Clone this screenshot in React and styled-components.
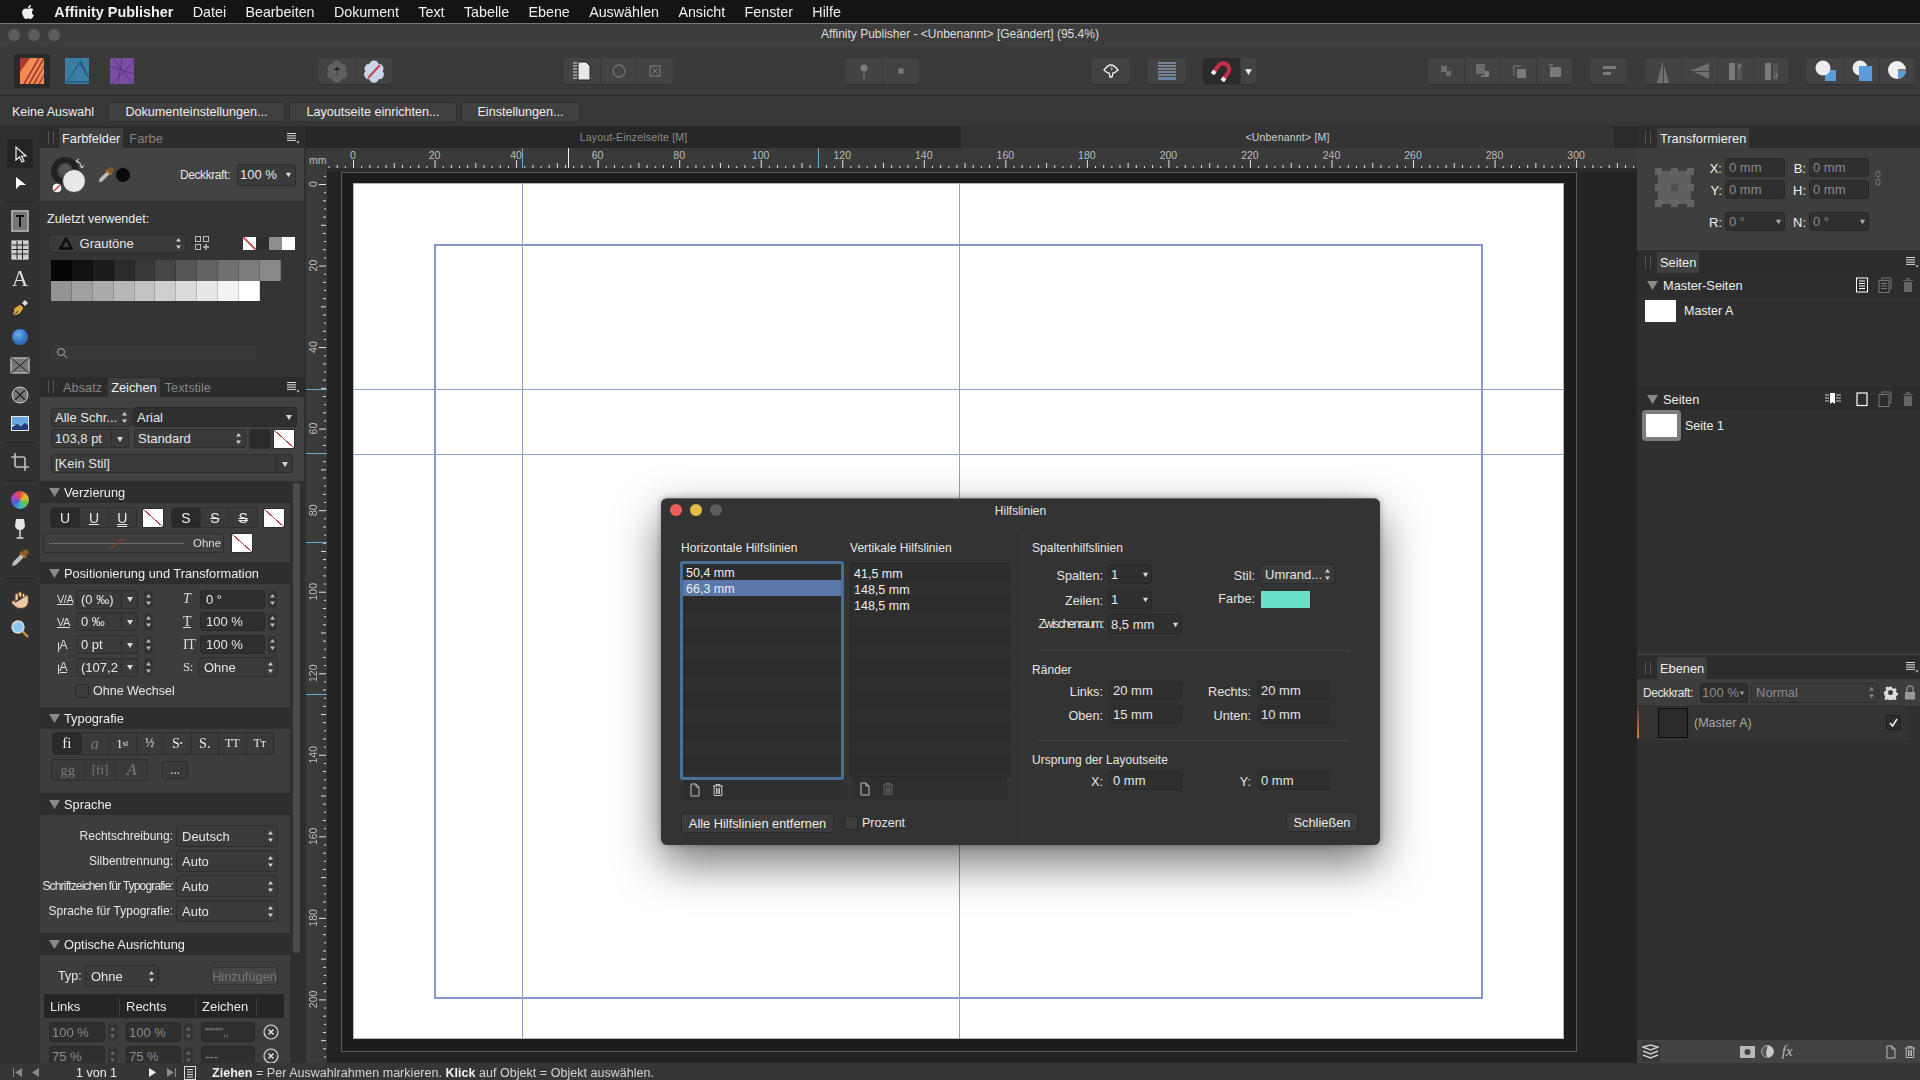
import React from 'react';
import styled, { createGlobalStyle } from 'styled-components';
import { FaApple } from 'react-icons/fa';
import { Crop, Hand } from 'lucide-react';

const Global = createGlobalStyle`
  html, body { margin: 0; padding: 0; background: #2f2f2f; }
  body { width: 1920px; height: 1080px; overflow: hidden; font-family: "Liberation Sans", Arial, sans-serif; color: #e8e8e8; font-size: 13px; }
  * { box-sizing: border-box; }
  svg { display: block; flex: none; }
`;

const Root = styled.div`position: relative; width: 1920px; height: 1080px; display: flex; flex-direction: column; overflow: hidden; filter: blur(0.35px);`;
const MenuBar = styled.div`height: 23px; flex: none; background: #141414; display: flex; align-items: center; padding-left: 20px; gap: 19.3px; font-size: 14.3px; color: #f0f0f0;`;
const AppleBox = styled.div`width: 15px; display: flex; color: #eee;`;
const MenuTitle = styled.b`font-weight: 700; font-size: 14.4px;`;
const MenuItem = styled.span``;
const TitleBar = styled.div`height: 24px; flex: none; background: #3d3d3d; border-top: 1px solid #777; padding-bottom: 3px; display: flex; align-items: center; position: relative; justify-content: center; font-size: 12px; color: #ddd;`;
const Lights = styled.div`position: absolute; left: 8px; top: 5px; display: flex; gap: 8px;`;
const Light = styled.i`width: 12px; height: 12px; border-radius: 50%; background: ${p => p.$c || '#5c5c5c'}; display: block;`;
const Toolbar = styled.div`height: 49px; flex: none; background: #3a3a3a; border-bottom: 1px solid #272727; display: flex; align-items: center; padding-left: 9px;`;
const AppIcon = styled.div`width: 36px; height: 34px; margin: 0 4.5px; display: flex; align-items: center; justify-content: center; background: ${p => p.$on ? '#2a2a2a' : 'transparent'}; border-radius: 2px;`;
const TGroup = styled.div`display: flex; height: 26px; margin-left: ${p => p.$ml || 0}px; background: #434343; border-radius: 3px; overflow: hidden; box-shadow: 0 1px 1px rgba(0,0,0,.18);`;
const TBtn = styled.div`width: ${p => p.$w || 36}px; display: flex; align-items: center; justify-content: center; background: ${p => p.$on ? '#2b2b2b' : 'transparent'}; & + & { border-left: 1px solid #383838; }`;
const ContextBar = styled.div`height: 31px; flex: none; background: #373737; display: flex; align-items: center; padding: 1px 0 0 12px; gap: 4px; border-bottom: 1px solid #2b2b2b;`;
const CtxLabel = styled.span`width: 92px; font-size: 12.5px; color: #eee;`;
const CtxBtn = styled.div`height: 20px; width: ${p => p.$w}px; display: flex; align-items: center; justify-content: center; background: #404040; border: 1px solid #2f2f2f; border-radius: 3px; font-size: 12.6px; color: #eee;`;
const Body = styled.div`flex: 1; display: flex; min-height: 0;`;
const StatusBar = styled.div`height: 17px; flex: none; background: #363636; display: flex; align-items: center; padding: 2px 0 0 12px; font-size: 12.5px; color: #ddd;`;
const NavBtn = styled.div`margin-left: ${p => p.$ml || 0}px; display: flex;`;
const NavText = styled.span`margin-left: 36px; width: 72px; font-size: 12.5px; color: #eee;`;
const StatusMsg = styled.span`margin-left: 16px; letter-spacing: .03px; color: #d5d5d5; b { color: #f0f0f0; }`;

const ToolCol = styled.div`width: 40px; flex: none; background: #313131; padding-top: 12px; display: flex; flex-direction: column; align-items: center;`;
const ToolSlot = styled.div`width: 26px; height: 29px; display: flex; align-items: center; justify-content: center; flex: none; background: ${p => p.$on ? '#242424' : 'transparent'}; border-radius: 3px;`;
const ToolDiv = styled.div`width: 100%; height: ${p => p.$h || 9}px; flex: none; display: flex; align-items: center; &::before { content: ''; flex: 1; margin: 0 6px; height: 1px; background: #262626; }`;
const SerifA = styled.span`font-family: "Liberation Serif", serif; font-size: 23px; color: #ddd;`;
const Wheel = styled.div`width: 18px; height: 18px; border-radius: 50%; background: conic-gradient(#e6493c, #e8b93a, #6cc24a, #35b6c9, #4a5fd0, #b548c0, #e6493c);`;

const LeftPanel = styled.div`width: 266px; flex: none; background: #2f2f2f; display: flex; flex-direction: column; overflow: hidden;`;
const TabRow = styled.div`height: ${p => p.$h || 21}px; flex: none; background: #2c2c2c; display: flex; align-items: flex-end; padding-left: 7px; padding-right: ${p => p.$pr ?? 6}px;`;
const Grip = styled.div`width: 12px; height: 14px; margin-bottom: 3px; flex: none; &::before { content: ''; display: block; margin-left: 1px; width: 4px; height: 13px; border-left: 1px solid #555; border-right: 1px solid #555; }`;
const Tab = styled.div`height: ${p => p.$tall || 20}px; padding: 0 3px; display: flex; align-items: center; font-size: 12.8px; background: ${p => p.$on ? '#3f3f3f' : 'transparent'}; color: ${p => p.$on ? '#f0f0f0' : '#858585'}; margin-left: ${p => p.$ml || 0}px;`;
const PMenu = styled.div`margin-left: auto; align-self: center;`;
const ColorHead = styled.div`height: 53px; flex: none; width: 264px; background: #434343; display: flex; align-items: center; padding-left: 10px;`;
const DeckLabel = styled.span`margin-left: ${p => p.$ml || 0}px; width: 57px; flex: none; font-size: 12px; letter-spacing: -0.42px; color: #e5e5e5;`;
const SwatchArea = styled.div`height: 176px; flex: none; width: 264px; background: #343434; padding: 10px 0 0 7px;`;
const Caption = styled.div`height: 16px; display: flex; align-items: center; font-size: 12.5px; color: #eee;`;
const SwRow = styled.div`display: flex; align-items: center; margin-top: 7px; margin-left: 1px;`;
const Toggle = styled.div`display: flex; margin-left: 33px;`;
const ToggleCell = styled.div`width: 13px; height: 13px; background: ${p => p.$none ? 'linear-gradient(to top right, #fff 46%, #c66 46%, #c66 54%, #fff 54%)' : p.$bg};`;
const SwGrid = styled.div`display: grid; grid-template-columns: repeat(11, 20.9px); grid-auto-rows: 20.5px; margin: 7px 0 0 4px;`;
const SwCell = styled.div`background: ${p => p.$c}; border-right: 1px solid rgba(0,0,0,.15);`;
const Search = styled.div`width: 209px; height: 18px; margin: 43px 0 0 2px; background: #383838; border: 1px solid #303030; border-radius: 3px; display: flex; align-items: center; padding-left: 6px;`;
const CharHead = styled.div`height: 84px; flex: none; width: 264px; background: #424242; padding: 10px 0 0 11px; display: flex; flex-direction: column;`;
const Flex = styled.div`display: flex; align-items: center; gap: ${p => p.$gap || 0}px; margin-top: ${p => p.$mt || 0}px; margin-left: ${p => p.$ml || 0}px;`;
const Ctl = styled.div`width: ${p => p.$w}px; height: ${p => p.$h || 19}px; flex: none; display: flex; align-items: center; padding-left: ${p => p.$pl ?? 5}px; background: ${p => p.$dark ? '#2f2f2f' : '#3a3a3a'}; border: 1px solid ${p => p.$dark ? '#292929' : '#2d2d2d'}; border-radius: 3px; font-size: ${p => p.$fs || 13}px; color: ${p => p.$dim ? '#8b8b8b' : '#e6e6e6'}; white-space: nowrap; margin-left: ${p => p.$ml || 0}px; margin-top: ${p => p.$mt || 0}px;`;
const CtlText = styled.span`flex: 1; min-width: 0; margin-left: ${p => p.$ml || 0}px;`;
const CtlCap = styled.span`width: ${p => p.$w || 16}px; align-self: stretch; flex: none; display: flex; align-items: center; justify-content: center; border-left: ${p => p.$sep ? '1px solid #2b2b2b' : '0'};`;
const NoneSw = styled.div`width: ${p => p.$w || 20}px; height: ${p => p.$h || 18}px; flex: none; margin-left: ${p => p.$ml || 0}px; background: linear-gradient(to top right, #fff 48%, #b84a4a 48%, #b84a4a 52%, #fff 52%); box-shadow: 0 0 0 1px #2d2d2d;`;
const BlackSw = styled.div`width: 20px; height: 18px; flex: none; background: #2a2a2a; box-shadow: 0 0 0 1px #333; border-radius: 2px;`;
const ScrollWrap = styled.div`flex: 1; min-height: 0; display: flex; overflow: hidden;`;
const ScrollContent = styled.div`width: 250px; flex: none; display: flex; flex-direction: column;`;
const Gutter = styled.div`width: 16px; flex: none; padding: 2px 0 0 3px;`;
const Thumb = styled.div`width: 7px; height: 470px; border-radius: 4px; background: #4b4b4b;`;
const SecHead = styled.div`height: 22px; flex: none; background: #2e2e2e; display: flex; align-items: center; padding-left: 9px; font-size: 12.8px; color: #eee; gap: 4px;`;
const SecBody = styled.div`height: ${p => p.$h}px; flex: none; background: #3d3d3d; padding: ${p => p.$pt || 0}px 0 0 ${p => p.$pl || 0}px;`;
const Seg = styled.div`display: flex; height: ${p => p.$h || 19}px; background: #3a3a3a; border-radius: 3px; box-shadow: 0 0 0 1px #2d2d2d; flex: none; margin-left: ${p => p.$ml || 0}px;`;
const SegCell = styled.div`width: ${p => p.$w || 28.3}px; display: flex; align-items: center; justify-content: center; font-size: ${p => p.$fs || 14}px; font-family: ${p => p.$serif ? '"Liberation Serif", serif' : 'inherit'}; font-style: ${p => p.$it ? 'italic' : 'normal'}; color: ${p => p.$dim ? '#7a7a7a' : '#e9e9e9'}; background: ${p => p.$on ? '#2a2a2a' : 'transparent'}; & + & { border-left: 1px solid #2e2e2e; }`;
const Deco = styled.span`text-decoration: ${p => p.$d}; text-decoration-thickness: 1px;`;
const Sup = styled.sup`font-size: 8px; line-height: 0;`;
const SliderBox = styled.div`width: 181px; height: 20px; flex: none; margin-left: 3px; background: #3f3f3f; border: 1px solid #2d2d2d; border-radius: 2px; display: flex; align-items: center; padding-left: 5px; font-size: 11.5px; color: #ddd;`;
const SliderLine = styled.div`width: 135px; height: 1px; background: #6b6b6b; margin-right: 9px; display: flex; justify-content: center; align-items: center; &::after { content: ''; width: 16px; height: 1px; background: #a33; transform: rotate(-38deg); }`;
const PosGrid = styled.div`display: grid; padding-left: 17px; grid-template-columns: 19px 62px 45px 17px 65px 12px; grid-auto-rows: 20px; row-gap: 2.8px; align-items: center;`;
const PosIcon = styled.span`font-size: ${p => p.$fs || 11}px; font-family: ${p => p.$serif ? '"Liberation Serif", serif' : 'inherit'}; font-style: ${p => p.$it ? 'italic' : 'normal'}; color: #ddd; text-decoration: ${p => p.$u ? 'underline' : 'none'}; white-space: nowrap; letter-spacing: -0.5px; line-height: 14px;`;
const Stepper = styled.div`width: 9px; height: 18px; margin-left: ${p => p.$ml ?? 6}px; background: #333; border-radius: 4px; display: flex; align-items: center; justify-content: center;`;
const CheckBox = styled.div`width: 14px; height: 14px; flex: none; background: #3c3c3c; border: 1px solid #2a2a2a; border-radius: 3px; display: flex; align-items: center; justify-content: center;`;
const LangRow = styled.div`display: flex; align-items: center; height: 22px; margin-top: ${p => p.$mt || 0}px;`;
const LangLabel = styled.span`width: 133px; flex: none; text-align: right; font-size: 12px; color: #e6e6e6; white-space: nowrap; letter-spacing: ${p => p.$cond ? '-0.82px' : '0'};`;
const DotsBtn = styled.div`width: 26px; height: 18px; margin-left: 15px; background: #3a3a3a; border: 1px solid #2b2b2b; border-radius: 3px; display: flex; align-items: center; justify-content: center; font-size: 12px;`;
const TypRow = styled.div`display: flex; align-items: center; height: 22px; padding-left: 18px;`;
const TypLabel = styled.span`width: 27px; font-size: 12.5px;`;
const GhostBtn = styled.div`width: 67px; height: 18px; margin-left: 52px; background: #454545; border: 1px solid #333; border-radius: 3px; font-size: 12.8px; color: #777; display: flex; align-items: center; justify-content: center;`;
const TblHead = styled.div`display: grid; grid-template-columns: 76px 76px 61px 27px; width: 240px; height: 24px; margin: 7px 0 0 4px; background: #252525; align-items: center; font-size: 13px; padding-top: 1px;`;
const TblHeadCell = styled.div`padding-left: 6px; height: 18px; display: flex; align-items: center; border-right: 1px solid #3a3a3a;`;
const TblRow = styled.div`display: flex; align-items: center; height: 20px; margin: ${p => p.$mt || 0}px 0 0 9px;`;
const MiniStep = styled.div`width: 9px; height: 18px; margin: 0 ${p => p.$mr || 9}px 0 3px; background: #343434; border-radius: 4px; display: flex; align-items: center; justify-content: center;`;

const CanvasCol = styled.div`flex: 1; min-width: 0; display: flex; flex-direction: column; background: #232323;`;
const DocTabs = styled.div`height: 21px; flex: none; display: flex; background: #2a2a2a;`;
const DocTab = styled.div`width: ${p => p.$w}px; flex: none; display: flex; align-items: center; justify-content: center; padding-bottom: 2px; font-size: 10.5px; letter-spacing: .2px; background: ${p => p.$on ? '#343434' : '#272727'}; color: ${p => p.$on ? '#cfcfcf' : '#8d8d8d'};`;
const RulerTop = styled.div`height: 24px; flex: none; display: flex; background: #3a3a3a;`;
const Corner = styled.div`width: 21px; flex: none; font-size: 10.5px; color: #c0c0c0; padding: 6px 0 0 3px;`;
const CanvasRow = styled.div`flex: 1; min-height: 0; display: flex; overflow: hidden;`;
const Viewport = styled.div`flex: 1; min-width: 0; padding-left: 14px; background: #232323;`;
const Frame = styled.div`width: 1236px; height: 880px; background: #1d1d1d; border: 1px solid #5a5a5a; padding: 10px 11px 0 11px;`;
const Page = styled.div`position: relative; width: 1211px; height: 856px; background: #fff; box-shadow: inset 0 0 0 1px #b5b5b5;`;
const MarginBox = styled.div`position: absolute; left: 81px; top: 61px; width: 1049px; height: 755px; border: 2px solid #8497cf;`;
const VGuide = styled.div`position: absolute; top: 0; bottom: 0; left: ${p => p.$x}px; width: 1px; background: #8fa3c4;`;
const HGuide = styled.div`position: absolute; left: 0; right: 0; top: ${p => p.$y}px; height: 1px; background: #8fa3c4;`;

const RightPanel = styled.div`width: 283px; flex: none; background: #303030; display: flex; flex-direction: column; overflow: hidden;`;
const TransBody = styled.div`height: 101px; flex: none; background: #3e3e3e; display: flex; padding-left: 18px;`;
const Selector = styled.div`width: 39px; height: 39px; margin-top: 20px; flex: none;`;
const TransGrid = styled.div`display: grid; margin-top: 10px; grid-template-columns: 31px 60px 24px 60px; grid-template-rows: 19px 19px 29px; row-gap: 3px; align-items: end; align-content: start;`;
const TransLabel = styled.span`text-align: right; padding-right: 3px; font-size: 13px; line-height: 21px; height: 19px; color: #eee;`;
const Chain = styled.div`margin: 22px 0 0 6px;`;
const Sep = styled.div`height: 1px; flex: none; background: #474747;`;
const PagesBody = styled.div`flex: none; height: 381px; background: #303030;`;
const PageHead = styled.div`height: 24px; display: flex; align-items: center; padding-left: 10px; background: #2d2d2d; margin-top: ${p => p.$mt || 0}px; font-size: 12.8px; color: #eee; gap: 5px;`;
const IconSlots = styled.div`margin-left: auto; display: flex; padding-right: 1px;`;
const IconSlot = styled.div`width: ${p => p.$w || 23}px; display: flex; align-items: center; justify-content: center;`;
const ThumbRow = styled.div`display: flex; align-items: center; gap: 8px; padding-left: 8px; margin-top: 3px; height: 22px; font-size: 12.5px; color: #eee;`;
const PageThumb = styled.div`width: 31px; height: 22px; flex: none; background: #fff;`;
const SelThumb = styled.div`width: 39px; height: 31px; flex: none; margin-right: -4px; background: #fff; border: 4px solid #7d7d7d; border-radius: 4px;`;
const ThumbRowSel = styled(ThumbRow)`height: 31px; margin-top: -1px; padding-left: 5px; gap: 8px;`;
const LayerBar = styled.div`height: 28px; flex: none; background: #3d3d3d; display: flex; align-items: center; padding-left: 6px; font-size: 12.5px; color: #eee; border-bottom: 1px solid #2c2c2c;`;
const LayerRow = styled.div`height: 33px; flex: none; background: #333; display: flex; align-items: center; border-bottom: 1px solid #3a3a3a; font-size: 12.5px; color: #aaa; margin-right: 13px; padding-bottom: 1px;`;
const OrangeStrip = styled.div`width: 2px; align-self: stretch; flex: none; background: linear-gradient(#5a3a30, #e07a48);`;
const LayerThumb = styled.div`width: 30px; height: 30px; flex: none; margin: 0 6px 0 19px; background: #2b2b2b; border: 1px solid #0d0d0d;`;
const LayerCheck = styled.div`width: 15px; height: 15px; margin-left: auto; margin-right: 6px; background: #2c2c2c; border: 1px solid #1f1f1f; border-radius: 2px; display: flex; align-items: center; justify-content: center;`;
const LayerFill = styled.div`flex: 1; background: #303030;`;
const LayerBottom = styled.div`height: 23px; flex: none; background: #424242; display: flex; align-items: center; padding-left: 5px;`;
const StackBtn = styled.div`width: 20px; height: 20px; display: flex; align-items: center; justify-content: center; background: #373737;`;

const Dialog = styled.div`position: absolute; left: 661px; top: 498px; width: 719px; height: 347px; background: #333; border-radius: 6px; border-top: 1px solid #6a6a6a; box-shadow: 0 18px 45px rgba(0,0,0,.55), 0 0 6px rgba(0,0,0,.3); display: flex; flex-direction: column;`;
const DlgTitle = styled.div`height: 24px; flex: none; position: relative; display: flex; align-items: center; justify-content: center; font-size: 12px; color: #e6e6e6;`;
const DlgLights = styled.div`position: absolute; left: 9px; top: 5px; display: flex; gap: 8px;`;
const DlgBody = styled.div`flex: 1; display: flex; padding: 17px 0 0 19px;`;
const DlgLeft = styled.div`width: 340px; flex: none;`;
const ListCols = styled.div`display: flex; gap: 6px;`;
const ListCol = styled.div`width: ${p => p.$w}px; flex: none;`;
const DlgHead = styled.div`height: 16px; display: flex; align-items: center; padding-left: ${p => p.$pl || 0}px; font-size: 12px; color: #e8e8e8; letter-spacing: .05px;`;
const List = styled.div`height: ${p => p.$h}px; margin-top: ${p => p.$mt}px; border: ${p => p.$focus ? '3px solid #4a7099' : '1px solid #282828'}; border-radius: ${p => p.$focus ? 3 : 0}px; padding-top: ${p => p.$focus ? 0 : 1}px; background: repeating-linear-gradient(#2d2d2d 0 16px, #2f2f2f 16px 32px); font-size: 12.5px;`;
const ListItem = styled.div`height: 16px; padding: 2px 0 0 ${p => p.$pl || 3}px; line-height: 14px; color: #eee; background: ${p => p.$sel ? '#5a78a8' : 'transparent'};`;
const ListFoot = styled.div`height: ${p => p.$h}px; background: #2f2f2f; display: flex; align-items: center; gap: 9px; padding-left: 5px; margin: 0 ${p => p.$mr || 3}px 0 ${p => p.$ml || 3}px;`;
const DlgFoot = styled.div`display: flex; align-items: center; margin-top: 13px; padding-left: 1px;`;
const DlgBtn = styled.div`height: 20px; width: ${p => p.$w}px; flex: none; background: #3c3c3c; border: 1px solid #2a2a2a; border-radius: 3px; padding-top: 1px; display: flex; align-items: center; justify-content: center; font-size: 12.8px; color: #eee; align-self: ${p => p.$end ? 'flex-end' : 'auto'}; margin-top: ${p => p.$mt || 0}px;`;
const DlgCheck = styled(CheckBox)`margin-left: 10px;`;
const CheckText = styled.span`margin-left: 4px; font-size: 12.5px; color: #e6e6e6;`;
const DlgDivider = styled.div`width: 1px; height: 302px; margin: -8px 0 0 2px; flex: none; background: #3e3e3e;`;
const DlgRight = styled.div`width: 326px; margin-left: 9px; flex: none; display: flex; flex-direction: column;`;
const FormRow = styled.div`display: flex; align-items: center; height: ${p => p.$h || 20}px; margin-top: ${p => p.$mt || 0}px;`;
const FormLabel = styled.span`width: ${p => p.$w}px; flex: none; text-align: right; padding: ${p => p.$up ? 0 : 3}px 5px 0 0; font-size: ${p => p.$cond ? 12 : 12.7}px; color: #e6e6e6; white-space: nowrap; letter-spacing: ${p => p.$cond ? '-1.3px' : '0'};`;
const HRule = styled.div`height: 1px; flex: none; background: #444; margin: ${p => p.$mt}px 8px 0 7px;`;
const ColorSw = styled.div`width: 49px; height: 17px; background: #67e2c9; margin-left: 1px;`;
const FormHead = styled(DlgHead)`margin-top: ${p => p.$mt || 0}px;`;

const UpDown = ({ c = '#d0d0d0' }) => (
  <svg width="7" height="13" viewBox="0 0 7 13"><path d="M3.500 1 6 4.500H1zM3.500 12 1 8.500h5z" fill={c} /></svg>
);
const Caret = ({ c = '#d8d8d8', s = 8 }) => (
  <svg width={s} height={s} viewBox="0 0 8 8"><path d="M1 2h6L4 7z" fill={c} /></svg>
);
const Tri = () => <svg width="11" height="9" viewBox="0 0 11 9"><path d="M0 0h11L5.500 9z" fill="#8a8a8a" /></svg>;
const MenuIcon = () => (
  <svg width="13" height="12" viewBox="0 0 13 12"><path d="M0 1.500h9M0 3.800h9M0 6.100h9M0 8.400h9" stroke="#ddd" /><path d="M9.500 9.500h3L11 11.500z" fill="#ddd" /></svg>
);
const DocIcon = ({ c = '#bbb', s = 14 }) => (
  <svg width={s} height={s} viewBox="0 0 14 14" fill="none"><path d="M3 1h5l3 3v9H3zM8 1v3h3" stroke={c} /></svg>
);
const Trash = ({ c = '#bbb', s = 14 }) => (
  <svg width={s} height={s} viewBox="0 0 14 14" fill="none"><path d="M2 3h10M5 3V1.500h4V3M3.200 3v9.500h7.600V3M5.500 5v6M7 5v6M8.500 5v6" stroke={c} /></svg>
);
const NewPageLines = ({ c = '#fff' }) => (
  <svg width="14" height="16" viewBox="0 0 14 16" fill="none"><rect x="1.500" y="1" width="11" height="14" stroke={c} /><path d="M4 4h6M4 6.500h6M4 9h6M4 11.500h6" stroke={c} /></svg>
);
const CopyLines = () => (
  <svg width="14" height="16" viewBox="0 0 14 16" fill="none" stroke="#777"><path d="M4 3V1h9v11h-2" /><rect x="1" y="3.500" width="10" height="12" /><path d="M3 6.500h6M3 9h6M3 11.500h6" /></svg>
);
const SquarePage = () => <svg width="14" height="16" viewBox="0 0 14 16" fill="none"><rect x="2" y="2" width="10" height="12.500" stroke="#fff" strokeWidth="1.200" /></svg>;
const CopySquare = () => <svg width="14" height="16" viewBox="0 0 14 16" fill="none" stroke="#777"><path d="M4 3V1h9v11h-2" /><rect x="1" y="3.500" width="10" height="12" /></svg>;
const TrashFill = () => <svg width="12" height="16" viewBox="0 0 12 16"><path d="M1 3h10v1H1zM4 1h4v1.400H4zM2 5h8v10H2z" fill="#666" /></svg>;

const PubIcon = () => (
  <svg width="24" height="26" viewBox="0 0 24 26"><rect width="24" height="26" fill="#f08d56" /><path d="M0 0h10L0 14zM3 26 18 0h2L5 26zM8 26 23 0h1v2L10 26zM13 26l11-19v2L15 26zM18 26l6-10v2l-4 8z" fill="#a93a2e" /></svg>
);
const DesIcon = () => (
  <svg width="24" height="26" viewBox="0 0 24 26"><rect width="24" height="26" fill="#3b7da3" /><path d="M0 26 15 3h1.500L3 23h21v1.500H0zM16 3l8 16v2L14 5z" fill="#24597c" /></svg>
);
const PhoIcon = () => (
  <svg width="24" height="26" viewBox="0 0 24 26"><rect width="24" height="26" fill="#7a4ea2" /><path d="M12 0 8 26M0 8l24 8M24 3 2 26M3 0l20 26" stroke="#56347a" strokeWidth="1" /></svg>
);
const Flower = ({ slash }) => (
  <svg width="24" height="24" viewBox="0 0 24 24"><path d="M12 1.500a4.500 4.500 0 0 1 4.400 3.200 4.800 4.800 0 0 1 4.200 7.600 4.800 4.800 0 0 1-4 8 4.800 4.800 0 0 1-9.200 0 4.800 4.800 0 0 1-4-8 4.800 4.800 0 0 1 4.200-7.600A4.500 4.500 0 0 1 12 1.500z" fill={slash ? '#c9d6ea' : '#5f5f5f'} />{slash ? <path d="M6 19 18 6" stroke="#c6454a" strokeWidth="2" /> : <path d="M12 8v8M9 11l3-3 3 3" stroke="#3d3d3d" />}</svg>
);
const SmallPageTool = () => (
  <svg width="18" height="20" viewBox="0 0 18 20"><path d="M0 2h6M0 5h6M0 8h6M0 11h6M0 14h6M0 17h18" stroke="#ddd" /><path d="M5 1h8l4 4v14H5z" fill="#e8e8e8" stroke="#222" /></svg>
);
const Dim = styled.span`display: flex; color: #707070;`;
const Svg = ({ children, w = 18, h = 18, vb }) => <svg width={w} height={h} viewBox={vb || `0 0 ${w} ${h}`}>{children}</svg>;

const Magnet = () => (
  <svg width="24" height="24" viewBox="0 0 24 24" fill="none"><g transform="rotate(35 12 12)"><path d="M6 18V10a6 6 0 0 1 12 0v8" stroke="#c23049" strokeWidth="4.200" /><path d="M6 16v4M18 16v4" stroke="#f4f4f4" strokeWidth="4.200" /></g></svg>
);

const ShapeOp = ({ kind }) => (
  <svg width="24" height="24" viewBox="0 0 24 24">
    {kind === 0 && <><path d="M12 11h11v11H12z" fill="#5a9bdc" /><circle cx="10" cy="9" r="7.500" fill="#ededed" /></>}
    {kind === 1 && <><circle cx="10" cy="9" r="7.500" fill="#ededed" /><path d="M9 7h13v15H9z" fill="#5a9bdc" /></>}
    {kind === 2 && <><circle cx="11" cy="11" r="9" fill="#f0f0f0" /><path d="M12 12h8a9 9 0 0 1-8 8z" fill="#5a9bdc" /><path d="M12 10h10v2H12z" fill="#3a3a3a" opacity=".6" /></>}
  </svg>
);

const ChooserIcon = () => (
  <svg width="38" height="38" viewBox="0 0 38 38" fill="none">
    <circle cx="15" cy="15" r="11" stroke="#222" strokeWidth="6" />
    <circle cx="15" cy="14" r="6" fill="#555" />
    <circle cx="24" cy="25" r="11.500" fill="#e8e8e8" stroke="#3a3a3a" />
    <path d="M26 5q5 1 6 7" stroke="#ddd" />
    <path d="M26 5l3-2M26 5l3 2M32 12l-2-2.500M32 12l2-2.500" stroke="#ddd" />
    <circle cx="7" cy="32" r="5" fill="#fff" stroke="#222" />
    <path d="M4 35 10 29" stroke="#c23a3a" strokeWidth="1.400" />
  </svg>
);

const Pipette = ({ s = 20 }) => (
  <svg width={s} height={s} viewBox="0 0 20 20" fill="none"><path d="M2 18 3 14 11 6l3 3-8 8z" fill="#bdbdbd" /><path d="M11 3l6 6-2 1.500-5.500-5.500z" fill="#a26a2a" /><circle cx="15.500" cy="4.500" r="3" fill="#8a5a25" /></svg>
);

const CloseCircle = () => (
  <svg width="16" height="16" viewBox="0 0 16 16" fill="none" stroke="#ddd"><circle cx="8" cy="8" r="7" strokeWidth="1.200" /><path d="M5.500 5.500l5 5M10.500 5.500l-5 5" strokeWidth="1.500" /></svg>
);

const Swatches = ['#050505', '#111', '#1c1c1c', '#2a2a2a', '#383838', '#464646', '#555', '#636363', '#6f6f6f', '#7b7b7b', '#888', '#939393', '#9f9f9f', '#ababab', '#b7b7b7', '#c3c3c3', '#cfcfcf', '#dbdbdb', '#e7e7e7', '#f3f3f3', '#fff'];

const HRuler = () => {
  const o = 26, k = 4.077, ticks = [], labels = [];
  for (let m = -6; m <= 314; m += 2) {
    const x = o + m * k;
    const h = m % 20 === 0 ? 8 : m % 10 === 0 ? 5 : m % 4 === 0 ? 3 : 2;
    ticks.push(<rect key={m} x={x} y={20 - h} width="1" height={h} fill="#e2e2e2" />);
    if (m % 20 === 0 && m >= 0 && m <= 300) labels.push(<text key={m} x={x} y="11" fontSize="10.5" fill="#bdbdbd" textAnchor="middle" fontFamily="Liberation Sans, sans-serif">{m}</text>);
  }
  return (
    <svg width="1310" height="24" viewBox="0 0 1310 24">
      <rect y="20" width="1310" height="4" fill="#2b2b2b" />
      {ticks}{labels}
      <rect x="195" y="0" width="1" height="20" fill="#6aa9c9" />
      <rect x="241" y="0" width="1" height="20" fill="#f0f0f0" />
      <rect x="491" y="0" width="1" height="20" fill="#6aa9c9" />
    </svg>
  );
};
const VRuler = () => {
  const o = 12, k = 4.077, ticks = [], labels = [];
  for (let m = -2; m <= 216; m += 2) {
    const y = o + m * k;
    const h = m % 20 === 0 ? 7 : m % 10 === 0 ? 5 : m % 4 === 0 ? 3 : 2;
    ticks.push(<rect key={m} x={20 - h} y={y} width={h} height="1" fill="#e2e2e2" />);
    if (m % 20 === 0 && m >= 0) labels.push(<text key={m} transform={`translate(11 ${y}) rotate(-90)`} fontSize="10.5" fill="#bdbdbd" textAnchor="middle" fontFamily="Liberation Sans, sans-serif">{m}</text>);
  }
  return (
    <svg width="21" height="892" viewBox="0 0 21 892">
      <rect width="21" height="892" fill="#3a3a3a" />
      {ticks}{labels}
      {[217, 281, 370, 522].map(y => <rect key={y} y={y} width="21" height="1" fill="#6aa9c9" />)}
    </svg>
  );
};

const PosField = ({ children }) => (
  <Ctl $w={62} $h={19} $pl={4}><CtlText>{children}</CtlText><CtlCap $w={16} $sep><Caret /></CtlCap></Ctl>
);
const NumField = ({ children }) => <Ctl $w={65} $h={19} $dark><CtlText>{children}</CtlText></Ctl>;
const Step = ({ ml }) => <Stepper $ml={ml}><UpDown c="#bbb" /></Stepper>;
const FxText = styled.span`font-family: "Liberation Serif", serif; font-style: italic; font-size: 15px; color: #bbb;`;

const LightsSet = () => <><Light /><Light /><Light /></>;

export default function App() {
  return (
    <Root>
      <Global />
      <MenuBar>
        <AppleBox><FaApple size={16} /></AppleBox>
        <MenuTitle>Affinity Publisher</MenuTitle>
        {['Datei', 'Bearbeiten', 'Dokument', 'Text', 'Tabelle', 'Ebene', 'Auswählen', 'Ansicht', 'Fenster', 'Hilfe'].map(m => <MenuItem key={m}>{m}</MenuItem>)}
      </MenuBar>
      <TitleBar>
        <Lights><LightsSet /></Lights>
        Affinity Publisher - &lt;Unbenannt&gt; [Geändert] (95.4%)
      </TitleBar>
      <Toolbar>
        <AppIcon $on><PubIcon /></AppIcon>
        <AppIcon><DesIcon /></AppIcon>
        <AppIcon><PhoIcon /></AppIcon>
        <TGroup $ml={174}>
          <TBtn $w={37}><Flower /></TBtn>
          <TBtn $w={37}><Flower slash /></TBtn>
        </TGroup>
        <TGroup $ml={171}>
          <TBtn $w={37}><SmallPageTool /></TBtn>
          <TBtn $w={36}><Svg><circle cx="9" cy="9" r="6" fill="none" stroke="#707070" strokeWidth="1.300" /></Svg></TBtn>
          <TBtn $w={37}><Svg><rect x="4" y="4" width="10" height="10" fill="none" stroke="#808080" /><path d="M6.500 6.500l5 5M11.500 6.500l-5 5" stroke="#808080" /></Svg></TBtn>
        </TGroup>
        <TGroup $ml={172}>
          <TBtn $w={37}><Svg><circle cx="9" cy="6" r="3.600" fill="#7c7c7c" /><path d="M9 9v8" stroke="#7c7c7c" /></Svg></TBtn>
          <TBtn $w={37}><Svg><rect x="6.500" y="6.500" width="5" height="5" fill="#7c7c7c" /></Svg></TBtn>
        </TGroup>
        <TGroup $ml={172}>
          <TBtn $w={39}><Svg><path d="M2 8c3-4 5-5 7-5s4 1 7 5c-2 2-4 3-5 3l-1 4H8L7 11C5 11 4 10 2 8z" fill="none" stroke="#eee" strokeWidth="1.300" /><path d="M9 4l2 3-2 2" fill="#8aa8d6" /></Svg></TBtn>
        </TGroup>
        <TGroup $ml={17}>
          <TBtn $w={39}><svg width="20" height="20" viewBox="0 0 20 20"><path d="M1 2h18M1 5h18M1 8h18M1 11h18M1 14h18M1 17h18" stroke="#a8c4e4" strokeWidth="1.200" /><path d="M1 18.500h18" stroke="#5a86b8" /></svg></TBtn>
        </TGroup>
        <TGroup $ml={17}>
          <TBtn $w={37} $on><Magnet /></TBtn>
          <TBtn $w={16}><Caret c="#eee" s={9} /></TBtn>
        </TGroup>
        <TGroup $ml={172}>
          <TBtn $w={36}><Dim><Svg><path d="M4 4h6v6H4zM9 9h5v5H9z" fill="#6c6c6c" /></Svg></Dim></TBtn>
          <TBtn $w={36}><Dim><Svg><path d="M2 2h9v10H2z" fill="#6c6c6c" /><path d="M11 9h4v6H7v-2h4z" fill="#7a7a7a" /></Svg></Dim></TBtn>
          <TBtn $w={36}><Dim><Svg><path d="M3 3h8v2H5v8H3z" fill="#5f5f5f" /><path d="M7 7h9v9H7z" fill="#7a7a7a" /></Svg></Dim></TBtn>
          <TBtn $w={36}><Dim><Svg><path d="M3 2h4v2H3z" fill="#6c6c6c" /><path d="M4 5h11v10H4z" fill="#7a7a7a" /></Svg></Dim></TBtn>
        </TGroup>
        <TGroup $ml={18}>
          <TBtn $w={37}><Svg><path d="M3 4h13v3H3zM3 10h8v3H3z" fill="#7a7a7a" /></Svg></TBtn>
        </TGroup>
        <TGroup $ml={18}>
          <TBtn $w={36}><Svg w={18} h={24}><path d="M9 1v23H3zM10 6l5 18h-5z" fill="#6e6e6e" /></Svg></TBtn>
          <TBtn $w={36}><Svg w={24} h={18}><path d="M21 1v8H2zM21 10v7L6 10z" fill="#6e6e6e" /></Svg></TBtn>
          <TBtn $w={36}><Svg w={18} h={22}><path d="M2 3h6v17H2z" fill="#7a7a7a" /><path d="M10 3h5v17h-5z" fill="#555" /><path d="M12 9V5h2" fill="none" stroke="#8a8a8a" /></Svg></TBtn>
          <TBtn $w={36}><Svg w={18} h={22}><path d="M2 3h6v17H2z" fill="#7a7a7a" /><path d="M10 3h5v17h-5z" fill="#555" /><path d="M14 13v4h-3" fill="none" stroke="#8a8a8a" /></Svg></TBtn>
        </TGroup>
        <TGroup $ml={17}>
          <TBtn $w={37}><ShapeOp kind={0} /></TBtn>
          <TBtn $w={36}><ShapeOp kind={1} /></TBtn>
          <TBtn $w={36}><ShapeOp kind={2} /></TBtn>
        </TGroup>
      </Toolbar>
      <ContextBar>
        <CtxLabel>Keine Auswahl</CtxLabel>
        <CtxBtn $w={177}>Dokumenteinstellungen...</CtxBtn>
        <CtxBtn $w={168}>Layoutseite einrichten...</CtxBtn>
        <CtxBtn $w={119}>Einstellungen...</CtxBtn>
      </ContextBar>
      <Body>
        <ToolCol>
          <ToolSlot $on><Svg><path d="M5 2v13l3.500-3 2.500 5 2-1-2.500-5H15z" fill="none" stroke="#eee" strokeWidth="1.200" /></Svg></ToolSlot>
          <ToolSlot><Svg><path d="M5 3v12l4-4h6z" fill="#fff" /></Svg></ToolSlot>
          <ToolDiv />
          <ToolSlot><svg width="18" height="22" viewBox="0 0 18 22" fill="none"><rect x="1" y="1" width="16" height="20" stroke="#ddd" strokeWidth="1.300" /><rect x="2" y="2" width="14" height="18" fill="#777" /><path d="M5 6h8M9 6v11" stroke="#111" strokeWidth="2" /></svg></ToolSlot>
          <ToolSlot><svg width="18" height="20" viewBox="0 0 18 20"><rect x="1" y="1" width="16" height="18" fill="#ccc" stroke="#eee" /><path d="M1 5h16M1 9.500h16M1 14h16M6 1v18M11.500 1v18" stroke="#222" /></svg></ToolSlot>
          <ToolSlot><SerifA>A</SerifA></ToolSlot>
          <ToolSlot><svg width="20" height="22" viewBox="0 0 20 22"><path d="M2 20 4 11l6-4 4 4-4 6z" fill="#d9a83a" stroke="#222" /><path d="M3 19l5-5" stroke="#222" /><path d="M12 6l3-3 3 3-3 3z" fill="#ddd" /></svg></ToolSlot>
          <ToolSlot><svg width="20" height="20" viewBox="0 0 20 20"><defs><radialGradient id="blu" cx=".4" cy=".35"><stop offset="0" stopColor="#6fb0ec" /><stop offset="1" stopColor="#2f6fc0" /></radialGradient></defs><circle cx="10" cy="10" r="8" fill="url(#blu)" /></svg></ToolSlot>
          <ToolSlot><svg width="20" height="17" viewBox="0 0 20 17" fill="none"><rect x="1" y="1" width="18" height="15" fill="#777" stroke="#ddd" /><path d="M1 1l18 15M19 1 1 16" stroke="#222" /></svg></ToolSlot>
          <ToolSlot><svg width="20" height="20" viewBox="0 0 20 20" fill="none"><circle cx="10" cy="10" r="8" fill="#777" stroke="#ccc" /><path d="M5 5l10 10M15 5 5 15" stroke="#222" strokeWidth="1.300" /></svg></ToolSlot>
          <ToolSlot><svg width="18" height="15" viewBox="0 0 18 15"><rect width="18" height="15" fill="#e8e8e8" /><rect x="1" y="1" width="16" height="8" fill="#6aa6e0" /><path d="M1 11l5-3 4 2 4-3 3 2v5H1z" fill="#1f3d7a" /></svg></ToolSlot>
          <ToolDiv />
          <ToolSlot><Crop size={20} color="#bdbdbd" /></ToolSlot>
          <ToolDiv />
          <ToolSlot><Wheel /></ToolSlot>
          <ToolSlot><svg width="12" height="22" viewBox="0 0 12 22"><path d="M2 1h8l1 7q-1 4-5 4T1 8z" fill="#e6e6e6" /><path d="M6 12v7M2.500 20h7" stroke="#ddd" strokeWidth="1.500" /></svg></ToolSlot>
          <ToolSlot><Pipette /></ToolSlot>
          <ToolDiv $h={13} />
          <ToolSlot><Hand size={20} color="#5a3a28" fill="#eec9a6" strokeWidth={1.200} /></ToolSlot>
          <ToolSlot><svg width="20" height="20" viewBox="0 0 20 20" fill="none"><circle cx="8" cy="8" r="6" fill="#8cc8f0" stroke="#ddd" strokeWidth="1.400" /><path d="M12.500 12.500 18 18" stroke="#c9954a" strokeWidth="2.400" /></svg></ToolSlot>
        </ToolCol>
        <LeftPanel>
          <TabRow>
            <Grip /><Tab $on>Farbfelder</Tab><Tab $ml={3}>Farbe</Tab>
            <PMenu><MenuIcon /></PMenu>
          </TabRow>
          <ColorHead>
            <ChooserIcon />
            <Flex $ml={9}><Pipette s={18} /></Flex>
            <svg width="16" height="16" viewBox="0 0 16 16"><circle cx="8" cy="8" r="7.500" fill="#0a0a0a" stroke="#444" /></svg>
            <DeckLabel $ml={49}>Deckkraft:</DeckLabel>
            <Ctl $w={59} $h={22} $pl={2}><CtlText>100 %</CtlText><CtlCap $w={14}><Caret c="#ddd" s={7} /></CtlCap></Ctl>
          </ColorHead>
          <SwatchArea>
            <Caption>Zuletzt verwendet:</Caption>
            <SwRow>
              <Ctl $w={138} $pl={10}>
                <svg width="14" height="13" viewBox="0 0 14 13" fill="none"><path d="M7 1.500 12.700 11.500H1.300z" stroke="#0c0c0c" strokeWidth="2.400" /></svg>
                <CtlText $ml={3}>&nbsp;Grautöne</CtlText><CtlCap $w={14}><UpDown /></CtlCap>
              </Ctl>
              <Flex $ml={9}>
                <svg width="15" height="15" viewBox="0 0 15 15" fill="none" stroke="#bbb"><rect x=".5" y=".5" width="5" height="5" /><rect x="8.500" y=".5" width="5" height="5" /><rect x=".5" y="8.500" width="5" height="5" /><path d="M11 8v6M8 11h6" strokeWidth="1.500" /></svg>
              </Flex>
              <Toggle>
                <ToggleCell $none /><ToggleCell $bg="#2e2e2e" /><ToggleCell $bg="#8e8e8e" /><ToggleCell $bg="#fff" />
              </Toggle>
            </SwRow>
            <SwGrid>{Swatches.map(c => <SwCell key={c} $c={c} />)}</SwGrid>
            <Search><svg width="12" height="12" viewBox="0 0 12 12" fill="none" stroke="#aaa"><circle cx="5" cy="5" r="3.500" /><path d="M7.500 7.500 11 11" /></svg></Search>
          </SwatchArea>
          <TabRow $h={20}>
            <Grip /><Tab $ml={1} $tall={19}>Absatz</Tab><Tab $on $tall={19} $ml={3}>Zeichen</Tab><Tab $tall={19} $ml={2}>Textstile</Tab>
            <PMenu><MenuIcon /></PMenu>
          </TabRow>
          <CharHead>
            <Flex $gap={1}>
              <Ctl $w={81} $h={19} $pl={3}><CtlText>Alle Schr...</CtlText><CtlCap $w={14}><UpDown /></CtlCap></Ctl>
              <Ctl $w={164} $h={20} $dark $pl={3}><CtlText>Arial</CtlText><CtlCap $w={16} $sep><Caret /></CtlCap></Ctl>
            </Flex>
            <Flex $mt={2}>
              <Ctl $w={78} $h={19} $pl={3}><CtlText>103,8 pt</CtlText><CtlCap $w={17} $sep><Caret /></CtlCap></Ctl>
              <Ctl $w={112} $h={19} $ml={5} $pl={3}><CtlText>Standard</CtlText><CtlCap $w={14}><UpDown /></CtlCap></Ctl>
              <Flex $ml={4}><BlackSw /></Flex>
              <NoneSw $ml={4} />
            </Flex>
            <Ctl $w={242} $h={19} $mt={6} $pl={3}><CtlText>[Kein Stil]</CtlText><CtlCap $w={16} $sep><Caret /></CtlCap></Ctl>
          </CharHead>
          <ScrollWrap>
            <ScrollContent>
              <SecHead><Tri />Verzierung</SecHead>
              <SecBody $h={59} $pt={5}>
                <Flex $ml={11}>
                  <Seg>
                    <SegCell $on>U</SegCell>
                    <SegCell><Deco $d="underline">U</Deco></SegCell>
                    <SegCell><Deco $d="underline double">U</Deco></SegCell>
                  </Seg>
                  <NoneSw $ml={7} />
                  <Seg $ml={9}>
                    <SegCell $on>S</SegCell>
                    <SegCell><Deco $d="line-through">S</Deco></SegCell>
                    <SegCell><Deco $d="line-through double">S</Deco></SegCell>
                  </Seg>
                  <NoneSw $ml={7} />
                </Flex>
                <Flex $mt={6}>
                  <SliderBox><SliderLine />Ohne</SliderBox>
                  <NoneSw $ml={8} />
                </Flex>
              </SecBody>
              <SecHead><Tri />Positionierung und Transformation</SecHead>
              <SecBody $h={123} $pt={5}>
                <PosGrid>
                  <PosIcon $u>V/A</PosIcon><PosField>(0 ‰)</PosField><Step /><PosIcon $serif $it $fs={14}>T</PosIcon><NumField>0 °</NumField><Step ml={3} />
                  <PosIcon $u>VA</PosIcon><PosField>0 ‰</PosField><Step /><PosIcon $serif $u $fs={14}>T</PosIcon><NumField>100 %</NumField><Step ml={3} />
                  <PosIcon $fs={12}>ꞁA</PosIcon><PosField>0 pt</PosField><Step /><PosIcon $serif $fs={14}>IT</PosIcon><NumField>100 %</NumField><Step ml={3} />
                  <PosIcon $u $fs={12}>ꞁA</PosIcon><PosField>(107,2</PosField><Step /><PosIcon $serif $fs={13}>S:</PosIcon><Ctl $w={80} $h={20} $ml={-2}><CtlText>Ohne</CtlText><CtlCap $w={14}><UpDown /></CtlCap></Ctl><span />
                </PosGrid>
                <Flex $ml={35} $mt={7}><CheckBox /><CheckText>Ohne Wechsel</CheckText></Flex>
              </SecBody>
              <SecHead><Tri />Typografie</SecHead>
              <SecBody $h={64} $pt={4}>
                <Flex $ml={13}>
                  <Seg $h={21}>
                    <SegCell $w={27.5} $on $serif $fs={15}>fi</SegCell>
                    <SegCell $w={27.5} $serif $it $dim $fs={16}>a</SegCell>
                    <SegCell $w={27.5} $serif $fs={13}>1<Sup>st</Sup></SegCell>
                    <SegCell $w={27.5} $serif $fs={12}>½</SegCell>
                    <SegCell $w={27.5} $serif $fs={14}>S<Sup>•</Sup></SegCell>
                    <SegCell $w={27.5} $serif $fs={14}>S.</SegCell>
                    <SegCell $w={27.5} $serif $fs={12}>TT</SegCell>
                    <SegCell $w={27.5} $serif $fs={12}>Tт</SegCell>
                  </Seg>
                </Flex>
                <Flex $ml={12} $mt={6}>
                  <Seg $h={20}>
                    <SegCell $w={31.7} $serif $dim $fs={15}>gg</SegCell>
                    <SegCell $w={31.7} $serif $dim $fs={13}>[fi]</SegCell>
                    <SegCell $w={31.7} $serif $it $dim $fs={16}>A</SegCell>
                  </Seg>
                  <DotsBtn>...</DotsBtn>
                </Flex>
              </SecBody>
              <SecHead><Tri />Sprache</SecHead>
              <SecBody $h={118} $pt={10}>
                {[['Rechtschreibung:', 'Deutsch'], ['Silbentrennung:', 'Auto'], ['Schriftzeichen für Typografie:', 'Auto', 1], ['Sprache für Typografie:', 'Auto']].map(([l, v, c], i) => (
                  <LangRow key={l} $mt={i ? 3 : 0}>
                    <LangLabel $cond={c}>{l}</LangLabel>
                    <Ctl $w={102} $h={22} $ml={3}><CtlText>{v}</CtlText><CtlCap $w={14}><UpDown /></CtlCap></Ctl>
                  </LangRow>
                ))}
              </SecBody>
              <SecHead><Tri />Optische Ausrichtung</SecHead>
              <SecBody $h={108} $pt={10}>
                <TypRow>
                  <TypLabel>Typ:</TypLabel>
                  <Ctl $w={74} $h={22}><CtlText>Ohne</CtlText><CtlCap $w={14}><UpDown /></CtlCap></Ctl>
                  <GhostBtn>Hinzufügen</GhostBtn>
                </TypRow>
                <TblHead>
                  <TblHeadCell>Links</TblHeadCell><TblHeadCell>Rechts</TblHeadCell><TblHeadCell>Zeichen</TblHeadCell><span />
                </TblHead>
                <TblRow $mt={4}>
                  <Ctl $w={56} $h={20} $dark $dim $pl={2}>100 %</Ctl><MiniStep><UpDown c="#666" /></MiniStep>
                  <Ctl $w={55} $h={20} $dark $dim $pl={2}>100 %</Ctl><MiniStep $mr={8}><UpDown c="#666" /></MiniStep>
                  <Ctl $w={54} $h={20} $dark $dim $fs={10} $pl={3}>""""'',,</Ctl>
                  <Flex $ml={8}><CloseCircle /></Flex>
                </TblRow>
                <TblRow $mt={4}>
                  <Ctl $w={56} $h={20} $dark $dim $pl={2}>75 %</Ctl><MiniStep><UpDown c="#666" /></MiniStep>
                  <Ctl $w={55} $h={20} $dark $dim $pl={2}>75 %</Ctl><MiniStep $mr={8}><UpDown c="#666" /></MiniStep>
                  <Ctl $w={54} $h={20} $dark $dim $pl={3}>---</Ctl>
                  <Flex $ml={8}><CloseCircle /></Flex>
                </TblRow>
              </SecBody>
            </ScrollContent>
            <Gutter><Thumb /></Gutter>
          </ScrollWrap>
        </LeftPanel>
        <CanvasCol>
          <DocTabs>
            <DocTab $w={655}>Layout-Einzelseite [M]</DocTab>
            <DocTab $w={653} $on>&lt;Unbenannt&gt; [M]</DocTab>
          </DocTabs>
          <RulerTop><Corner>mm</Corner><HRuler /></RulerTop>
          <CanvasRow>
            <VRuler />
            <Viewport>
              <Frame>
                <Page>
                  <MarginBox />
                  <VGuide $x={169} /><VGuide $x={606} />
                  <HGuide $y={206} /><HGuide $y={271} />
                </Page>
              </Frame>
            </Viewport>
          </CanvasRow>
        </CanvasCol>
        <RightPanel>
          <TabRow $pr={1}><Grip /><Tab $on $ml={1}>Transformieren</Tab></TabRow>
          <TransBody>
            <Selector><svg width="39" height="39" viewBox="0 0 39 39"><rect x="3" y="3" width="33" height="33" fill="#5f5f5f" /><g fill="#646464"><rect x="0" y="0" width="7" height="7" /><rect x="16" y="0" width="7" height="7" /><rect x="32" y="0" width="7" height="7" /><rect x="0" y="16" width="7" height="7" /><rect x="32" y="16" width="7" height="7" /><rect x="0" y="32" width="7" height="7" /><rect x="16" y="32" width="7" height="7" /><rect x="32" y="32" width="7" height="7" /></g><rect x="16" y="16" width="7" height="7" fill="#4f4f4f" /></svg></Selector>
            <TransGrid>
              <TransLabel>X:</TransLabel><Ctl $w={60} $h={19} $dark $dim $pl={3}>0 mm</Ctl><TransLabel>B:</TransLabel><Ctl $w={60} $h={19} $dark $dim $pl={3}>0 mm</Ctl>
              <TransLabel>Y:</TransLabel><Ctl $w={60} $h={19} $dark $dim $pl={3}>0 mm</Ctl><TransLabel>H:</TransLabel><Ctl $w={60} $h={19} $dark $dim $pl={3}>0 mm</Ctl>
              <TransLabel>R:</TransLabel><Ctl $w={60} $h={19} $dark $dim $pl={3}><CtlText>0 °</CtlText><CtlCap $w={12}><Caret c="#aaa" s={7} /></CtlCap></Ctl>
              <TransLabel>N:</TransLabel><Ctl $w={60} $h={19} $dark $dim $pl={3}><CtlText>0 °</CtlText><CtlCap $w={12}><Caret c="#aaa" s={7} /></CtlCap></Ctl>
            </TransGrid>
            <Chain><svg width="6" height="16" viewBox="0 0 6 16" fill="none" stroke="#777"><rect x="1" y="1" width="4" height="6" rx="2" /><rect x="1" y="9" width="4" height="6" rx="2" /></svg></Chain>
          </TransBody>
          <Sep />
          <TabRow $h={23} $pr={1}><Grip /><Tab $on $ml={1} $tall={21}>Seiten</Tab><PMenu><MenuIcon /></PMenu></TabRow>
          <PagesBody>
            <PageHead>
              <Tri />Master-Seiten
              <IconSlots><IconSlot><NewPageLines /></IconSlot><IconSlot><CopyLines /></IconSlot><IconSlot><TrashFill /></IconSlot></IconSlots>
            </PageHead>
            <ThumbRow><PageThumb />Master A</ThumbRow>
            <PageHead $mt={65}>
              <Tri />Seiten
              <IconSlots>
                <IconSlot $w={34}><svg width="16" height="12" viewBox="0 0 16 12"><path d="M0 2h4M0 5h4M0 8h4M11 2h5M11 5h5M11 8h5" stroke="#ccc" /><path d="M5 0h5v11L7.500 9 5 11z" fill="#fff" /></svg></IconSlot>
                <IconSlot><SquarePage /></IconSlot><IconSlot><CopySquare /></IconSlot><IconSlot><TrashFill /></IconSlot>
              </IconSlots>
            </PageHead>
            <ThumbRowSel><SelThumb />Seite 1</ThumbRowSel>
          </PagesBody>
          <Sep />
          <TabRow $h={24} $pr={1}><Grip /><Tab $on $ml={1} $tall={22}>Ebenen</Tab><PMenu><MenuIcon /></PMenu></TabRow>
          <LayerBar>
            <DeckLabel>Deckkraft:</DeckLabel>
            <Ctl $w={48} $h={20} $dark $dim $pl={1}><CtlText>100 %</CtlText><CtlCap $w={10}><Caret c="#999" s={6} /></CtlCap></Ctl>
            <Ctl $w={128} $h={20} $ml={3} $dim $pl={4}><CtlText>Normal</CtlText><CtlCap $w={14}><UpDown c="#888" /></CtlCap></Ctl>
            <Flex $ml={4}><svg width="15" height="15" viewBox="0 0 24 24" fill="#ddd"><path d="M10 1h4l1 3.200 2.400 1 3-1.600 2.800 2.800-1.600 3 1 2.400 3.200 1v4l-3.200 1-1 2.400 1.600 3-2.800 2.800-3-1.600-2.400 1-1 3.200h-4l-1-3.200-2.400-1-3 1.600-2.800-2.800 1.600-3-1-2.400L0 14v-4l3.200-1 1-2.400-1.600-3L5.400.8l3 1.600 2.400-1z" transform="translate(1.500 1.500) scale(.88)" /><circle cx="12" cy="12" r="4" fill="#3d3d3d" /></svg></Flex>
            <Flex $ml={6}><svg width="12" height="15" viewBox="0 0 12 15" fill="none"><path d="M3 7V4a3 3 0 0 1 6 0v3" stroke="#888" strokeWidth="1.500" /><rect x="1" y="7" width="10" height="7.500" fill="#999" /></svg></Flex>
          </LayerBar>
          <LayerRow>
            <OrangeStrip /><LayerThumb />(Master A)
            <LayerCheck><svg width="11" height="11" viewBox="0 0 11 11" fill="none"><path d="M2 6l2.500 3L9 2" stroke="#fff" strokeWidth="1.400" /></svg></LayerCheck>
          </LayerRow>
          <LayerFill />
          <LayerBottom>
            <StackBtn><svg width="17" height="15" viewBox="0 0 17 15" fill="none" stroke="#ccc" strokeWidth="1.500"><path d="M1 3l7.500 3L16 3 8.500 1zM1 7l7.500 3L16 7M1 11l7.500 3L16 11" /></svg></StackBtn>
            <IconSlot $w={86} />
            <IconSlot $w={24}><svg width="15" height="12" viewBox="0 0 15 12"><path fillRule="evenodd" d="M0 0h15v12H0zM7.500 3a3 3 0 1 0 0 6 3 3 0 0 0 0-6z" fill="#b8b8b8" /></svg></IconSlot>
            <IconSlot $w={22}><svg width="13" height="13" viewBox="0 0 13 13"><circle cx="6.500" cy="6.500" r="6" fill="#555" stroke="#aaa" /><path d="M6.500.5a6 6 0 0 1 0 12L5 9z" fill="#c8c8c8" /></svg></IconSlot>
            <IconSlot $w={22}><FxText>fx</FxText></IconSlot>
            <IconSlot $w={94} />
            <IconSlot $w={22}><DocIcon c="#bbb" /></IconSlot>
            <IconSlot $w={22}><Trash /></IconSlot>
          </LayerBottom>
        </RightPanel>
      </Body>
      <StatusBar>
        <NavBtn><svg width="11" height="11" viewBox="0 0 11 11"><path d="M1 1h1v9H1zM10 1v9L3 5.500z" fill="#888" /></svg></NavBtn>
        <NavBtn $ml={8}><svg width="9" height="11" viewBox="0 0 9 11"><path d="M8 1v9L1 5.500z" fill="#888" /></svg></NavBtn>
        <NavText>1 von 1</NavText>
        <NavBtn><svg width="9" height="11" viewBox="0 0 9 11"><path d="M1 1v9l7-4.500z" fill="#eee" /></svg></NavBtn>
        <NavBtn $ml={9}><svg width="11" height="11" viewBox="0 0 11 11"><path d="M1 1v9l7-4.500zM9 1h1v9H9z" fill="#888" /></svg></NavBtn>
        <NavBtn $ml={7}><svg width="12" height="14" viewBox="0 0 12 14" fill="none" stroke="#ddd"><rect x=".5" y=".5" width="11" height="13" /><path d="M3 3.500h6M3 6h6M3 8.500h6M3 11h6" /></svg></NavBtn>
        <StatusMsg><b>Ziehen</b> = Per Auswahlrahmen markieren. <b>Klick</b> auf Objekt = Objekt auswählen.</StatusMsg>
      </StatusBar>
      <Dialog>
        <DlgTitle>
          <DlgLights><Light $c="#ee5f5b" /><Light $c="#e3bb45" /><Light /></DlgLights>
          Hilfslinien
        </DlgTitle>
        <DlgBody>
          <DlgLeft>
            <ListCols>
              <ListCol $w={164}>
                <DlgHead $pl={1}>Horizontale Hilfslinien</DlgHead>
                <List $focus $h={219} $mt={5}>
                  <ListItem>50,4 mm</ListItem>
                  <ListItem $sel>66,3 mm</ListItem>
                </List>
                <ListFoot $h={20}><DocIcon /><Trash c="#ccc" /></ListFoot>
              </ListCol>
              <ListCol $w={160}>
                <DlgHead>Vertikale Hilfslinien</DlgHead>
                <List $h={214} $mt={7}>
                  <ListItem>41,5 mm</ListItem>
                  <ListItem>148,5 mm</ListItem>
                  <ListItem>148,5 mm</ListItem>
                </List>
                <ListFoot $h={23} $ml={0} $mr={0}><DocIcon /><Trash c="#666" /></ListFoot>
              </ListCol>
            </ListCols>
            <DlgFoot>
              <DlgBtn $w={153}>Alle Hilfslinien entfernen</DlgBtn>
              <DlgCheck /><CheckText>Prozent</CheckText>
            </DlgFoot>
          </DlgLeft>
          <DlgDivider />
          <DlgRight>
            <DlgHead>Spaltenhilfslinien</DlgHead>
            <FormRow $mt={8}>
              <FormLabel $w={76}>Spalten:</FormLabel>
              <Ctl $w={44} $h={20} $dark $pl={2}><CtlText>1</CtlText><CtlCap $w={12}><Caret s={7} /></CtlCap></Ctl>
              <FormLabel $w={108}>Stil:</FormLabel>
              <Ctl $w={75} $h={20} $pl={4}><CtlText>Umrand...</CtlText><CtlCap $w={13}><UpDown /></CtlCap></Ctl>
            </FormRow>
            <FormRow $mt={5}>
              <FormLabel $w={76}>Zeilen:</FormLabel>
              <Ctl $w={44} $h={20} $dark $pl={2}><CtlText>1</CtlText><CtlCap $w={12}><Caret s={7} /></CtlCap></Ctl>
              <FormLabel $w={108} $up>Farbe:</FormLabel>
              <ColorSw />
            </FormRow>
            <FormRow $mt={5}>
              <FormLabel $w={76} $cond $up>Zwischenraum:</FormLabel>
              <Ctl $w={74} $h={20} $dark $pl={2}><CtlText>8,5 mm</CtlText><CtlCap $w={12}><Caret s={7} /></CtlCap></Ctl>
            </FormRow>
            <HRule $mt={16} />
            <FormHead $mt={11}>Ränder</FormHead>
            <FormRow $mt={3} $h={19}>
              <FormLabel $w={76}>Links:</FormLabel><Ctl $w={73} $h={19} $dark $pl={3} $ml={1}>20 mm</Ctl>
              <FormLabel $w={74}>Rechts:</FormLabel><Ctl $w={73} $h={19} $dark $pl={3} $ml={1}>20 mm</Ctl>
            </FormRow>
            <FormRow $mt={5} $h={19}>
              <FormLabel $w={76}>Oben:</FormLabel><Ctl $w={73} $h={19} $dark $pl={3} $ml={1}>15 mm</Ctl>
              <FormLabel $w={74}>Unten:</FormLabel><Ctl $w={73} $h={19} $dark $pl={3} $ml={1}>10 mm</Ctl>
            </FormRow>
            <HRule $mt={16} />
            <FormHead $mt={11}>Ursprung der Layoutseite</FormHead>
            <FormRow $mt={3} $h={19}>
              <FormLabel $w={76}>X:</FormLabel><Ctl $w={73} $h={19} $dark $pl={3} $ml={1}>0 mm</Ctl>
              <FormLabel $w={74}>Y:</FormLabel><Ctl $w={73} $h={19} $dark $pl={3} $ml={1}>0 mm</Ctl>
            </FormRow>
            <DlgBtn $w={72} $end $mt={22}>Schließen</DlgBtn>
          </DlgRight>
        </DlgBody>
      </Dialog>
    </Root>
  );
}
